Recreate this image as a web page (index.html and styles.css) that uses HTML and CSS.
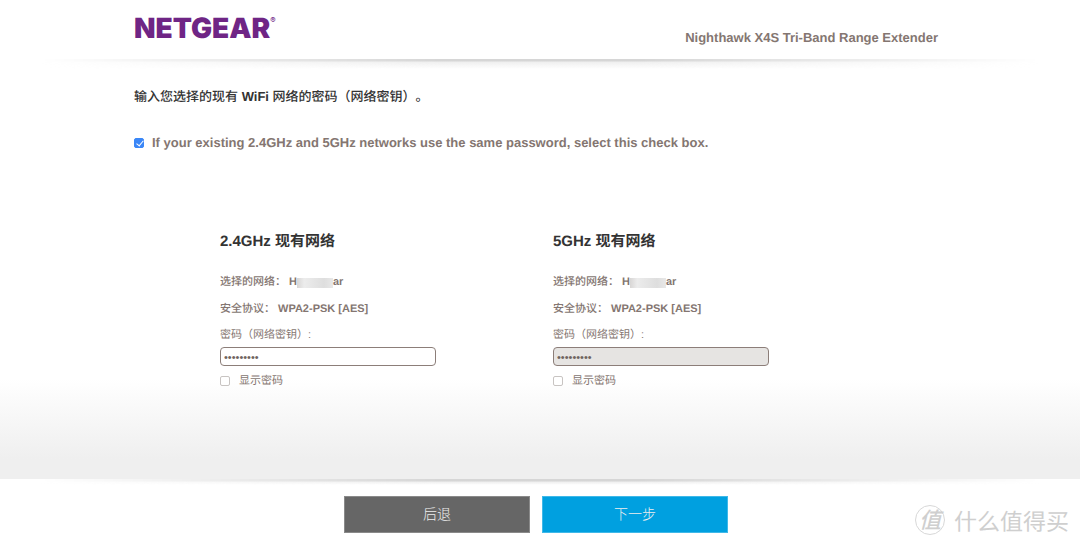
FILE: index.html
```
<!DOCTYPE html>
<html lang="zh-CN">
<head>
<meta charset="utf-8">
<meta name="viewport" content="width=device-width, initial-scale=1">
<title>NETGEAR</title>
<link rel="stylesheet" href="styles.css">
</head>
<body>
<header class="header">
  <div class="wrap header-row">
    <div class="logo">NETGEAR<span class="reg">®</span></div>
    <div class="model">Nighthawk X4S Tri-Band Range Extender</div>
  </div>
</header>
<main class="main">
  <div class="edge-shadow"></div>
  <form class="wrap" id="setup">
    <h1 class="title">输入您选择的现有 <b>WiFi</b> 网络的密码（网络密钥）。</h1>
    <label class="same"><input class="check" type="checkbox" checked><span>If your existing 2.4GHz and 5GHz networks use the same password, select this check box.</span></label>
    <div class="networks">
      <section class="network">
        <h2 class="band">2.4GHz 现有网络</h2>
        <p class="info"><span class="key">选择的网络：</span><b class="ssid">H<i class="mask"></i>ar</b></p>
        <p class="info"><span class="key">安全协议：</span><b>WPA2-PSK [AES]</b></p>
        <label class="pass-label" for="pass24">密码（网络密钥）:</label>
        <input class="pass" id="pass24" type="password" value="password1">
        <label class="show"><input class="check" type="checkbox"><span>显示密码</span></label>
      </section>
      <section class="network">
        <h2 class="band">5GHz 现有网络</h2>
        <p class="info"><span class="key">选择的网络：</span><b class="ssid">H<i class="mask"></i>ar</b></p>
        <p class="info"><span class="key">安全协议：</span><b>WPA2-PSK [AES]</b></p>
        <label class="pass-label" for="pass5">密码（网络密钥）:</label>
        <input class="pass" id="pass5" type="password" value="password1" disabled>
        <label class="show"><input class="check" type="checkbox"><span>显示密码</span></label>
      </section>
    </div>
  </form>
</main>
<footer class="footer">
  <div class="edge-shadow footer-shadow"></div>
  <div class="wrap actions">
    <button class="btn back" type="button">后退</button>
    <button class="btn next" type="submit" form="setup">下一步</button>
  </div>
  <div class="watermark"><span class="seal">值</span><span>什么值得买</span></div>
</footer>
</body>
</html>
```
FILE: styles.css
```
* { box-sizing: border-box; }

body {
  margin: 0;
  min-height: 100vh;
  display: flex;
  flex-direction: column;
  background: #fff;
  color: #847671;
  font-family: "Liberation Sans", "Noto Sans CJK SC", sans-serif;
  font-size: 11px;
  text-rendering: geometricPrecision;
  text-spacing-trim: space-all;
}

/* The content column sits slightly left of centre. */
.wrap {
  width: calc(100% - 32px);
  max-width: 804px;
  margin: 0 auto;
  position: relative;
  left: -4px;
}

.header { height: 59px; background: #fff; }
.header-row { display: flex; justify-content: space-between; }
.logo {
  display: flex;
  padding-top: 10px;
  color: #6f2585;
  font: 900 28px/36px Inter, sans-serif;
}
.reg { font-size: 8px; line-height: 20px; font-weight: 400; }
.model { padding-top: 30px; font-size: 13px; line-height: 16px; font-weight: bold; }

/* Fades out downwards and towards both ends. */
.edge-shadow {
  height: 10px;
  margin: 0 40px;
  background: linear-gradient(to bottom, #d6d6d6 0 2px, #efefef 3px, #fff0);
  mask-image: linear-gradient(to right, transparent, #000 40%, #000 60%, transparent);
}

.main {
  flex: 1;
  padding-bottom: 84px;
  background: linear-gradient(to top, #efefef, #efefef 20px, #fff 100px);
}
.title {
  margin: 0;
  padding-top: 18px;
  color: #333;
  font-size: 13px;
  line-height: 20px;
  font-weight: 500;
}
.same {
  display: flex;
  align-items: center;
  gap: 8px;
  margin-top: 26px;
  font-size: 13px;
  line-height: 20px;
  font-weight: bold;
}
.check {
  appearance: none;
  flex: none;
  width: 10px;
  height: 10px;
  margin: 0;
  border: 1px solid #c8c4c2;
  border-radius: 2px;
  background: #fff;
}
.check:checked {
  position: relative;
  border-color: #3b87f7;
  background: #3b87f7;
}
.check:checked::after {
  content: "";
  position: absolute;
  left: 3px;
  top: 0;
  width: 3px;
  height: 6px;
  border: solid #fff;
  border-width: 0 1px 1px 0;
  transform: rotate(40deg);
}

.networks {
  display: grid;
  grid-template-columns: repeat(2, minmax(0, 333px));
  margin-top: 79px;
  padding-left: 86px;
}
.band {
  margin: 0 0 17px;
  color: #333;
  font-size: 15px;
  line-height: 20px;
}
.info { display: flex; margin: 0; line-height: 27px; }
.key { font-weight: 500; margin-right: 3px; }
.ssid { display: flex; align-items: center; }
.mask {
  width: 36px;
  height: 10px;
  background: linear-gradient(to right, #d8d6d5, #ececec 20%, #dedede 75%, #e8e8e8);
}
.pass-label { display: block; line-height: 24px; }
.pass {
  display: block;
  width: 216px;
  max-width: 90%;
  height: 19px;
  padding: 0 3px;
  border: 1px solid #8c7e79;
  border-radius: 4px;
  background: #fff;
  color: #6f6460;
  font: 11px "Liberation Sans", sans-serif;
}
.pass:disabled { background: #e6e4e2; }
.show {
  display: flex;
  align-items: center;
  gap: 9px;
  margin-top: 5px;
  line-height: 20px;
}

.footer { position: relative; height: 68px; background: #fff; }
.footer-shadow { height: 6px; }
.actions {
  display: flex;
  justify-content: center;
  gap: 12px;
  padding-top: 11px;
}
.btn {
  width: 186px;
  height: 37px;
  padding: 0 0 3px;
  border: 1px solid #8a8a8a;
  background: #666;
  color: #eee;
  font: 300 14px "Noto Sans CJK SC", sans-serif;
}
.next { border-color: #3fb8e8; background: #00a0e0; }

/* Site mark laid over the bottom right corner. */
.watermark {
  position: absolute;
  right: 11px;
  bottom: 10px;
  display: flex;
  align-items: center;
  gap: 9px;
  color: #cfcfcf;
  font: 23px/34px "Noto Sans CJK SC", sans-serif;
}
.seal {
  width: 30px;
  height: 30px;
  border: 1px solid #d8d8d8;
  border-radius: 50%;
  text-align: center;
  font-size: 22px;
  line-height: 27px;
  font-style: italic;
  font-weight: 500;
}
```
